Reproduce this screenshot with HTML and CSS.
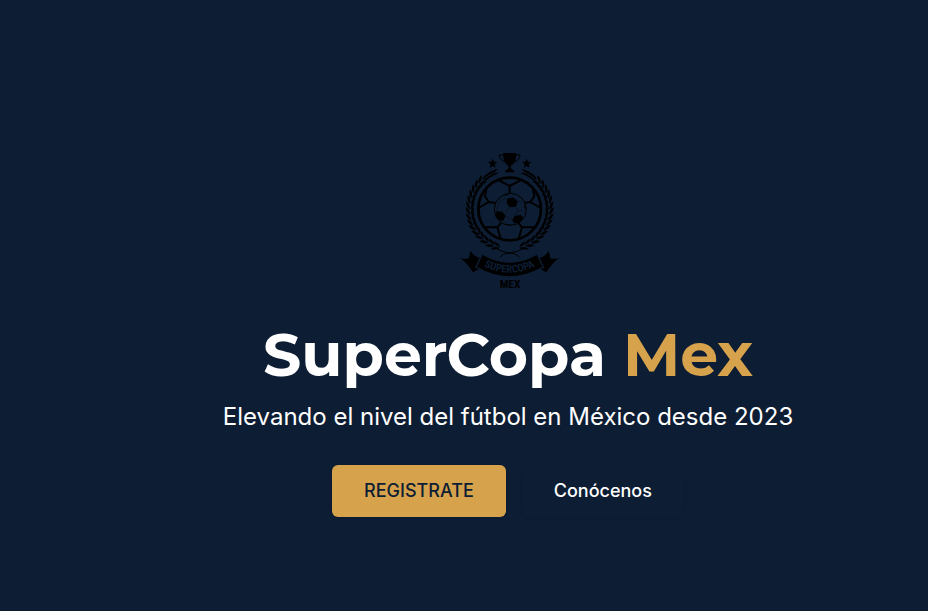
FILE: index.html
```html
<!DOCTYPE html>
<html lang="es">
<head>
<meta charset="utf-8">
<meta name="viewport" content="width=device-width, initial-scale=1">
<title>SuperCopa Mex</title>
<link rel="stylesheet" href="styles.css">
</head>
<body>
<main class="hero">
  <svg class="crest" viewBox="-5 0 360 450" role="img" aria-label="Escudo SuperCopa Mex">
    <defs>
      <path id="star" d="M0-14 4-5 14-4 6 3 9 13 0 8-9 13-6 3-14-4-4-5Z"/>
      <path id="leaf" d="M168 73Q174 61 192 60Q188 72 168 73ZM168 75Q177 87 192 84Q186 74 168 75Z"/>
      <path id="small-leaf" d="M168 73Q177 64 194 67Q186 74 168 73ZM168 75Q177 84 192 80Q184 74 168 75Z"/>
      <g id="branch">
        <use href="#small-leaf" transform="rotate(-23 180 192)"/>
        <use href="#small-leaf" transform="rotate(-30 180 192)"/>
        <use href="#small-leaf" transform="rotate(-37 180 192)"/>
        <use href="#leaf" transform="rotate(-45 180 192)"/>
        <use href="#leaf" transform="rotate(-53 180 192)"/>
        <use href="#leaf" transform="rotate(-61 180 192)"/>
        <use href="#leaf" transform="rotate(-69 180 192)"/>
        <use href="#leaf" transform="rotate(-77 180 192)"/>
        <use href="#leaf" transform="rotate(-85 180 192)"/>
        <use href="#leaf" transform="rotate(-93 180 192)"/>
        <use href="#leaf" transform="rotate(-101 180 192)"/>
        <use href="#leaf" transform="rotate(-109 180 192)"/>
        <use href="#leaf" transform="rotate(-117 180 192)"/>
        <use href="#leaf" transform="rotate(-125 180 192)"/>
        <use href="#leaf" transform="rotate(-133 180 192)"/>
        <use href="#leaf" transform="rotate(-142 180 192)"/>
        <use href="#leaf" transform="rotate(-151 180 192)"/>
        <use href="#leaf" transform="rotate(-160 180 192)"/>
        <path class="line" d="M136 308Q156 322 180 324T208 337"/>
      </g>
      <path id="tail" d="M30 338Q45 344 57 340L63 318Q74 336 90 338L76 368 88 372 70 382Q50 350 30 338Z"/>
      <path id="ribbon-text" d="M82 352Q180 414 278 352"/>
    </defs>
    <path d="M160 24H200Q200 55 184 62L183 69 194 79V82H166V79L177 69 176 62Q160 55 160 24Z"/>
    <path class="line" d="M161 30H149Q149 46 168 51M199 30H211Q211 46 192 51"/>
    <use href="#star" x="129" y="55"/>
    <use href="#star" x="231" y="55"/>
    <circle class="ring" cx="180" cy="192" r="94"/>
    <path class="seam" d="M148 106 180 123 212 106M180 123V145M110 132 106 154 118 171 138 174M118 171 84 190M250 132 254 154 242 171 224 174M242 171 276 190M100 247H143L154 234M143 247 153 281M260 247H217L206 234M217 247 207 281"/>
    <circle class="line" cx="182" cy="193" r="48"/>
    <path d="M173 161 190 157 204 169 199 185 180 187 171 174ZM141 199 158 200 168 212 161 227 146 225 137 213ZM194 214 213 209 221 219 209 233 193 235 188 226ZM160 153 178 146 174 151ZM223 176 230 193 224 188ZM164 237 184 238 180 241Z"/>
    <path class="thin" d="M180 185 168 201M198 184 205 198 195 215M167 212 189 226M174 162 158 162 146 180 141 200M203 169 218 172M205 198 221 196M160 226 170 236"/>
    <use href="#branch"/>
    <use href="#branch" transform="matrix(-1 0 0 1 360 0)"/>
    <use href="#tail"/>
    <use href="#tail" transform="matrix(-1 0 0 1 360 0)"/>
    <path class="band" d="M98 328Q180 376 262 328L280 366Q180 424 80 366Z"/>
    <text class="ribbon-label"><textPath href="#ribbon-text" startOffset="50%">SUPERCOPA</textPath></text>
    <text class="crest-label" x="181" y="428">MEX</text>
  </svg>
  <h1 class="title">SuperCopa <span class="accent">Mex</span></h1>
  <p class="tagline">Elevando el nivel del fútbol en México desde 2023</p>
  <div class="actions">
    <a class="button button-primary" href="#registro">REGISTRATE</a>
    <a class="button" href="#conocenos">Conócenos</a>
  </div>
</main>
</body>
</html>
```

FILE: styles.css
```css
* {
  box-sizing: border-box;
}

body {
  margin: 0;
  background: #0d1d33;
  color: #fff;
  font-family: Inter, "Liberation Sans", sans-serif;
}

.hero {
  display: flex;
  flex-direction: column;
  align-items: center;
  justify-content: center;
  min-height: 100vh;
  padding: 50px 0 0 88px;
  text-align: center;
}

.crest {
  width: 120px;
  height: 150px;
  fill: #000;
}

.line,
.ring,
.seam,
.thin {
  fill: none;
  stroke: #000;
  stroke-width: 3px;
}

.ring {
  stroke-width: 8px;
}

.seam {
  stroke-width: 6px;
}

.thin {
  stroke-width: 1px;
}

.band {
  stroke: #0d1d33;
  stroke-width: 3px;
}

.ribbon-label,
.crest-label {
  font-family: "Roboto Condensed", "Liberation Sans Narrow", Roboto, sans-serif;
  font-size: 34px;
  font-weight: 700;
  text-anchor: middle;
}

.ribbon-label {
  fill: #0d1d33;
  font-size: 32px;
}

.title {
  margin: 30px 0 16px;
  font-family: Montserrat, Inter, sans-serif;
  font-size: 60px;
  font-weight: 700;
  line-height: 60px;
}

.accent {
  color: #d6a24c;
}

.tagline {
  margin: 0 0 32px;
  font-size: 24px;
  line-height: 32px;
}

.actions {
  display: flex;
  gap: 16px;
}

.button {
  padding: 12px 32px;
  border-radius: 6px;
  box-shadow: 0 1px 3px rgb(0 0 0 / 10%);
  color: #fff;
  font-size: 18px;
  font-weight: 500;
  line-height: 28px;
  text-decoration: none;
}

.button-primary {
  background: #d6a24c;
  color: #0d1d33;
}
```
